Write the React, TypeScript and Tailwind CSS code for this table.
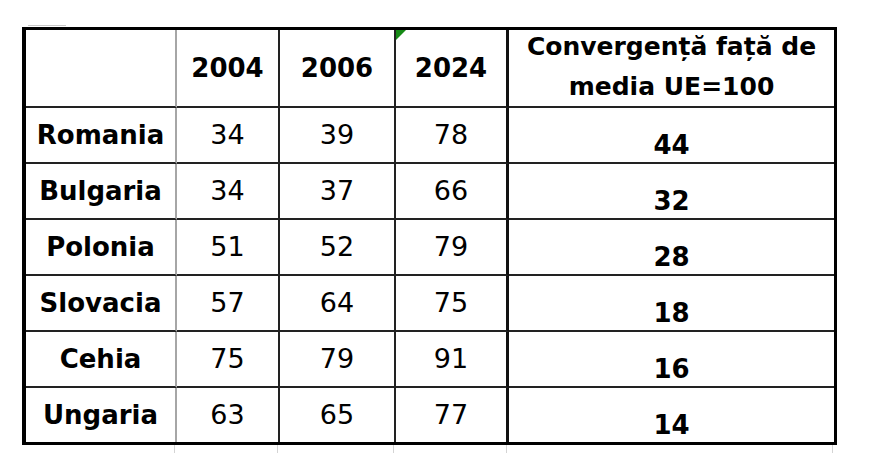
import React from 'react';

interface Row {
  country: string;
  y2004: number;
  y2006: number;
  y2024: number;
  gap: number;
}

const rows: Row[] = [
  { country: 'Romania', y2004: 34, y2006: 39, y2024: 78, gap: 44 },
  { country: 'Bulgaria', y2004: 34, y2006: 37, y2024: 66, gap: 32 },
  { country: 'Polonia', y2004: 51, y2006: 52, y2024: 79, gap: 28 },
  { country: 'Slovacia', y2004: 57, y2006: 64, y2024: 75, gap: 18 },
  { country: 'Cehia', y2004: 75, y2006: 79, y2024: 91, gap: 16 },
  { country: 'Ungaria', y2004: 63, y2006: 65, y2024: 77, gap: 14 },
];

const App: React.FC = () => {
  return (
    <div
      className="min-h-screen w-[874px] h-[463px] bg-white pt-[27px] pl-[22px] text-black overflow-hidden"
      style={{ fontFamily: '"DejaVu Sans", Verdana, sans-serif' }}
    >
      <div className="relative w-[815px]">
        {/* faint spreadsheet gridline above the table */}
        <div className="absolute -top-[2px] left-[6px] w-[38px] h-px bg-[#c8c8c8]" />

        <div className="grid grid-cols-[151px_103px_116px_113px_325px] grid-rows-[78px_repeat(5,56px)_54px] border-t-[3px] border-l-[4px] border-r-[3px] border-b-[3px] border-black">
          {/* header */}
          <div className="border-r-2 border-b-2 border-r-[#a6a6a6] border-b-[#222]" />
          <div className="flex items-center justify-center border-r-2 border-b-2 border-[#222] text-[26px] font-bold">
            2004
          </div>
          <div className="flex items-center justify-center border-r-2 border-b-2 border-[#222] text-[26px] font-bold">
            2006
          </div>
          <div className="relative flex items-center justify-center border-r-[3px] border-b-2 border-[#111] border-b-[#222] text-[26px] font-bold">
            <span className="absolute top-0 left-0 w-0 h-0 border-t-[10px] border-r-[10px] border-t-[#168a16] border-r-transparent" />
            2024
          </div>
          <div className="flex flex-col items-center justify-center border-b-2 border-[#222] text-[25px] font-bold leading-[40px] pb-[2px]">
            <span>Convergență față de</span>
            <span>media UE=100</span>
          </div>

          {/* body */}
          {rows.map((row, index) => {
            const last = index === rows.length - 1;
            const bottom = last ? '' : 'border-b-2';
            return (
              <React.Fragment key={row.country}>
                <div className={`flex items-center justify-center border-r-2 border-r-[#a6a6a6] border-b-[#222] text-[26px] font-bold ${bottom}`}>
                  {row.country}
                </div>
                <div className={`flex items-center justify-center border-r-2 border-[#222] text-[27px] ${bottom}`}>
                  {row.y2004}
                </div>
                <div className={`flex items-center justify-center border-r-2 border-[#222] text-[27px] ${bottom}`}>
                  {row.y2006}
                </div>
                <div className={`flex items-center justify-center border-r-[3px] border-r-[#111] border-b-[#222] text-[27px] ${bottom}`}>
                  {row.y2024}
                </div>
                <div className={`flex items-end justify-center border-[#222] text-[26px] font-bold leading-[26px] pb-[4px] ${bottom}`}>
                  {row.gap}
                </div>
              </React.Fragment>
            );
          })}
        </div>

        {/* faint gridline stubs below and to the right */}
        <div className="flex h-[8px]">
          <div className="w-[153px] border-r border-[#d4d4d4]" />
          <div className="w-[103px] border-r border-[#d4d4d4]" />
          <div className="w-[116px] border-r border-[#d4d4d4]" />
          <div className="w-[113px] border-r border-[#d4d4d4]" />
          <div className="w-[326px] border-r border-[#d4d4d4]" />
        </div>
      </div>
    </div>
  );
};

export default App;
